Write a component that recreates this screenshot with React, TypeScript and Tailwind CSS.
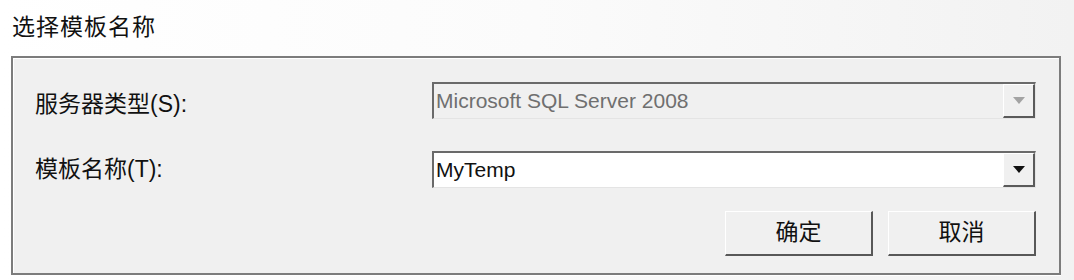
const FONT = "font-['Liberation_Sans','Noto_Sans_CJK_SC',sans-serif]";

function Arrow({ disabled }: { disabled?: boolean }) {
  return (
    <svg width="12" height="7" viewBox="0 0 12 7">
      <path d="M0 0H12L6 7Z" fill={disabled ? "#a3a3a3" : "#111"} />
    </svg>
  );
}

function Combo({ value, disabled }: { value: string; disabled?: boolean }) {
  return (
    <div
      className={`flex h-[37px] items-stretch border-t-2 border-l-2 border-b border-r border-t-[#6a6a6a] border-l-[#6a6a6a] border-b-[#e4e4e4] border-r-[#e4e4e4] ${
        disabled ? "bg-[#f0f0f0]" : "bg-white"
      }`}
    >
      <div className={`flex flex-1 items-center pl-[2px] text-[21px] ${disabled ? "text-[#6f6f6f]" : "text-[#111]"}`}>
        {value}
      </div>
      <div className="flex w-[32px] items-center justify-center border-t border-l border-b-2 border-r-2 border-t-white border-l-white border-b-[#5a5a5a] border-r-[#5a5a5a] bg-[#f0f0f0]">
        <Arrow disabled={disabled} />
      </div>
    </div>
  );
}

function Button({ children }: { children: React.ReactNode }) {
  return (
    <button
      type="button"
      className="flex h-[45px] w-[148px] items-center justify-center border-t border-l border-b-2 border-r-2 border-t-white border-l-white border-b-[#585858] border-r-[#585858] bg-[#f0f0f0] text-[23px] text-[#111]"
    >
      {children}
    </button>
  );
}

export default function App() {
  return (
    <div className={`${FONT} flex h-[280px] w-[1074px] flex-col bg-gradient-to-r from-white via-[#fbfbfb] to-[#f2f2f2]`}>
      <div className="flex h-[56px] items-center pl-[12px] pb-[1px] text-[23px] tracking-[1px] text-[#111]">
        选择模板名称
      </div>
      <div className="mb-[5px] ml-[11px] mr-[13px] flex flex-1 flex-col border-2 border-[#7c7c7c] bg-[#f0f0f0] pl-[22px] pr-[23px] pt-[21px] shadow-[inset_1px_1px_0_#ffffff,0_1px_0_#ffffff]">
        <div className="flex items-center">
          <div className="w-[397px] pt-[8px] text-[23px] text-[#111]">服务器类型(S):</div>
          <div className="flex-1">
            <Combo value="Microsoft SQL Server 2008" disabled />
          </div>
        </div>
        <div className="mt-[29px] flex items-center">
          <div className="w-[397px] text-[23px] text-[#111]">模板名称(T):</div>
          <div className="flex-1">
            <Combo value="MyTemp" />
          </div>
        </div>
        <div className="mt-[23px] flex justify-end gap-[15px]">
          <Button>确定</Button>
          <Button>取消</Button>
        </div>
      </div>
    </div>
  );
}
